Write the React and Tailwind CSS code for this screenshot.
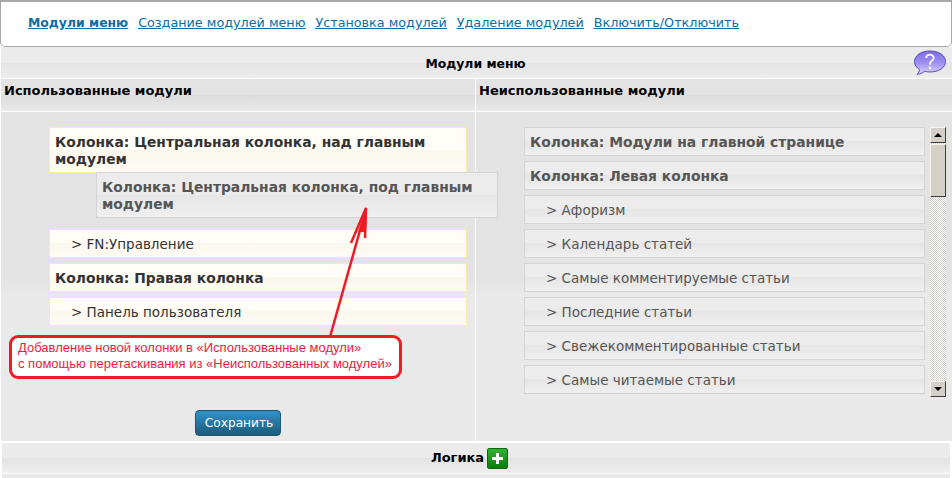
function Row({ children, used, bold }) {
  const bg = used
    ? "border-[#fbeba8] bg-[linear-gradient(#fffdf5_0%,#fffdf5_50%,#fbf9ee_50%,#fdfbf3_100%)] text-[#333]"
    : "border-[#d4d4d4] bg-[linear-gradient(#ececec_0%,#ececec_50%,#e6e6e6_50%,#efefef_100%)] text-[#555]";
  return (
    <div className={`border ${bg} ${bold ? "font-bold px-[5px] text-[13.85px]" : "pl-[21px] pr-[5px] text-[13.5px]"} pt-[6px] pb-[4px] leading-[17px]`}>
      {children}
    </div>
  );
}
const headBg = "bg-[linear-gradient(#ebebeb_0%,#ebebeb_50%,#e3e3e3_50%,#eeeeee_100%)]";
const subBg = "bg-[linear-gradient(#e3e3e3_0%,#e3e3e3_50%,#dcdcdc_50%,#e9e9e9_100%)]";
const bodyBg = "bg-[linear-gradient(#e3e3e3_0%,#e3e3e3_50%,#e9e9e9_56%,#e9e9e9_100%)]";
const sb3d = "border border-t-[#f4f3ee] border-l-[#f4f3ee] border-r-[#404040] border-b-[#404040] bg-[#d4d0c8]";

export default function App() {
  return (
    <div className="relative w-[952px] h-[478px] overflow-hidden bg-white text-black font-['DejaVu_Sans',Verdana,sans-serif]">
      <div className="h-[47px] border border-[#a8a8a8] rounded-b-[5px] border-t-2 flex items-start pt-[12px] pl-[27px] gap-[10px] text-[12.75px] leading-[17px] text-[#0a6ea6] underline">
        <a className="font-bold text-[12.4px]">Модули меню</a>
        <a>Создание модулей меню</a>
        <a>Установка модулей</a>
        <a>Удаление модулей</a>
        <a>Включить/Отключить</a>
      </div>
      <div className={`relative h-[32px] ml-px pt-[3px] pr-[2px] flex items-center justify-center font-bold text-[12.4px] border-b border-white ${headBg}`}>
        Модули меню
        <svg className="absolute left-[912px] top-[3px]" width="34" height="26" viewBox="0 0 34 26">
          <defs>
            <linearGradient id="q" x1="0" y1="0" x2="0" y2="1">
              <stop offset="0" stopColor="#7c6ce6" />
              <stop offset="0.5" stopColor="#9c8ef0" />
              <stop offset="1" stopColor="#ddd6fa" />
            </linearGradient>
          </defs>
          <path d="M17 1C8 1 1.500 5.500 1.500 11.500c0 3.500 2 6.200 5 8 0 2-1 3.500-2.500 4.800 3-.2 5.500-1.300 7.500-3 1.800.5 3.500.7 5.500.7 9 0 15.500-4.500 15.500-10.500S26 1 17 1z" fill="url(#q)" stroke="#5a4fb0" strokeWidth="1" />
          <path d="M13 8c.5-2.500 2.500-3.500 4.500-3.200 2.300.3 3.500 2 3 4-.5 1.800-3.300 2.600-3.500 5v1" fill="none" stroke="#f4f0ff" strokeWidth="2" />
          <circle cx="17" cy="18" r="1.400" fill="#f4f0ff" />
        </svg>
      </div>
      <div className="flex ml-px">
        <div className="w-[474px]">
          <div className={`h-[33px] border-b border-white flex items-center pl-[3px] font-bold text-[13px] pb-[9px] ${subBg}`}>Использованные модули</div>
          <div className={`relative h-[329px] pt-[15px] pl-[48px] pr-[8px] ${bodyBg}`}>
            <div className="w-[418px] flex flex-col gap-[5px]">
              <div className="mb-[51px]"><Row used bold>Колонка: Центральная колонка, над главным модулем</Row></div>
              <Row used>&gt; FN:Управление</Row>
              <Row used bold>Колонка: Правая колонка</Row>
              <Row used>&gt; Панель пользователя</Row>
            </div>
            <div className="absolute left-[95px] top-[60px] w-[402px] z-10">
              <Row bold>Колонка: Центральная колонка, под главным модулем</Row>
            </div>
            <div className="absolute left-[8px] top-[223px] w-[393px] h-[44px] z-10 bg-white border-[3px] border-[#ed1c24] rounded-[9px] pl-[6px] pt-[2px] font-['Liberation_Sans',Arial,sans-serif] text-[13px] leading-[16px] text-[#ed1c3c] whitespace-nowrap">
              <div>Добавление новой колонки в «Использованные модули»</div>
              <div>с помощью перетаскивания из «Неиспользованных модулей»</div>
            </div>
            <div className="absolute left-[194px] top-[298px] w-[86px] h-[26px] pl-[2px] rounded-[4px] border border-[#1d5570] bg-[linear-gradient(#3192c8,#1d5a7c)] text-white text-[12.2px] flex items-center justify-center">Сохранить</div>
          </div>
        </div>
        <div className="w-px bg-white" />
        <div className="flex-1 min-w-0">
          <div className={`h-[33px] border-b border-white flex items-center pl-[3px] font-bold text-[13px] pb-[9px] ${subBg}`}>Неиспользованные модули</div>
          <div className={`h-[329px] pt-[15px] pl-[48px] flex gap-[5px] ${bodyBg}`}>
            <div className="w-[401px] h-[270px] overflow-hidden flex flex-col gap-[5px] shrink-0">
              <Row bold>Колонка: Модули на главной странице</Row>
              <Row bold>Колонка: Левая колонка</Row>
              <Row>&gt; Афоризм</Row>
              <Row>&gt; Календарь статей</Row>
              <Row>&gt; Самые комментируемые статьи</Row>
              <Row>&gt; Последние статьи</Row>
              <Row>&gt; Свежекомментированные статьи</Row>
              <Row>&gt; Самые читаемые статьи</Row>
            </div>
            <div className="w-[16px] h-[270px] flex flex-col bg-[repeating-conic-gradient(#d4d0c8_0%_25%,#ffffff_0%_50%)] bg-[length:2px_2px]">
              <div className={`h-[16px] flex items-center justify-center ${sb3d}`}>
                <div className="w-0 h-0 border-x-[4px] border-x-transparent border-b-[4px] border-b-black" />
              </div>
              <div className={`h-[53px] mt-px ${sb3d}`} />
              <div className="flex-1" />
              <div className={`h-[16px] flex items-center justify-center ${sb3d}`}>
                <div className="w-0 h-0 border-x-[4px] border-x-transparent border-t-[4px] border-t-black" />
              </div>
            </div>
          </div>
        </div>
      </div>
      <div className={`mt-[2px] mx-[2px] h-[30px] pr-[13px] flex items-center justify-center gap-[3px] font-bold text-[13px] ${headBg}`}>
        Логика
        <span className="w-[21px] h-[21px] rounded-[2px] bg-[linear-gradient(#34b334,#0a7a0a)] border border-[#0d6b0d] flex items-center justify-center">
          <svg width="11" height="11" viewBox="0 0 11 11"><path d="M4 0h3v4h4v3H7v4H4V7H0V4h4z" fill="#fff" /></svg>
        </span>
      </div>
      <div className="mt-px h-[5px] bg-[#e9e9e9] mx-[2px]" />
      <svg className="absolute left-0 top-0 z-20 pointer-events-none" width="952" height="478">
        <path d="M330 337 L366 209" stroke="#ed1c24" strokeWidth="2.500" fill="none" />
        <path d="M351 243 L366 208 L365 238" stroke="#ed1c24" strokeWidth="2.500" fill="none" />
        <path d="M367 207 L358 232 L366 232z" fill="#ed1c24" />
      </svg>
    </div>
  );
}
